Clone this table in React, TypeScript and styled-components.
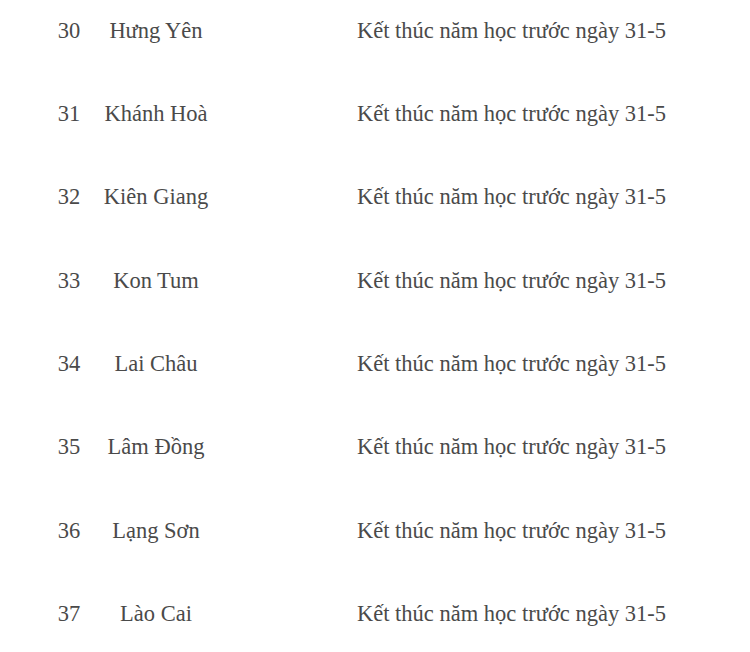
import React from 'react';
import styled, { createGlobalStyle } from 'styled-components';

const GlobalStyle = createGlobalStyle`
  html, body {
    margin: 0;
    padding: 0;
    background: #fff;
  }
  body {
    font-family: "Liberation Serif", "Times New Roman", serif;
    overflow: hidden;
  }
`;

const Table = styled.div`
  display: flex;
  flex-direction: column;
  margin-top: -11px;
  padding-left: 36px;
  color: #4a4a4a;
  font-size: 22.5px;
`;

const Row = styled.div`
  display: grid;
  grid-template-columns: 66px 108px 1fr;
  align-items: center;
  height: 83.33px;
`;

const Cell = styled.div<{ $align?: 'left' | 'center' }>`
  text-align: ${(p) => p.$align ?? 'center'};
  white-space: nowrap;
`;

const Note = styled(Cell)`
  padding-left: 147px;
`;

const rows = [
  { no: 30, name: 'Hưng Yên' },
  { no: 31, name: 'Khánh Hoà' },
  { no: 32, name: 'Kiên Giang' },
  { no: 33, name: 'Kon Tum' },
  { no: 34, name: 'Lai Châu' },
  { no: 35, name: 'Lâm Đồng' },
  { no: 36, name: 'Lạng Sơn' },
  { no: 37, name: 'Lào Cai' },
];

const App: React.FC = () => {
  return (
    <>
      <GlobalStyle />
      <Table>
        {rows.map((r) => (
          <Row key={r.no}>
            <Cell>{r.no}</Cell>
            <Cell>{r.name}</Cell>
            <Note $align="left">Kết thúc năm học trước ngày 31-5</Note>
          </Row>
        ))}
      </Table>
    </>
  );
};

export default App;
